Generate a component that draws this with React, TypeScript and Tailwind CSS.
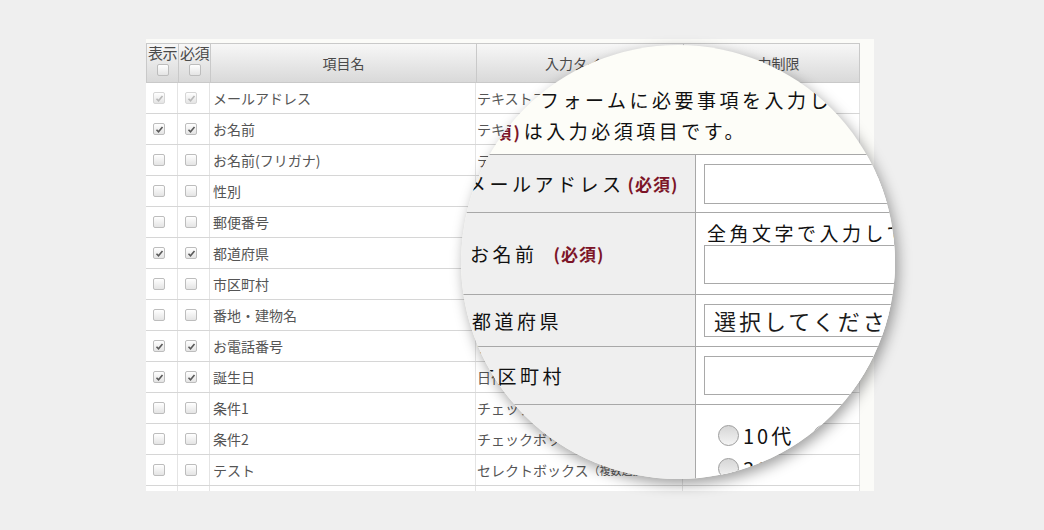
import React from 'react';

type Row = {
    name: string;
    type: string;
    note?: string;
    on: boolean;
    locked?: boolean;
};

const ROWS: Row[] = [
    { name: 'メールアドレス', type: 'テキストフォーム（メール）', on: true, locked: true },
    { name: 'お名前', type: 'テキストフォーム', on: true },
    { name: 'お名前(フリガナ)', type: 'テキストフォーム', on: false },
    { name: '性別', type: 'ラジオボタン', on: false },
    { name: '郵便番号', type: 'テキストフォーム', on: false },
    { name: '都道府県', type: 'セレクトボックス', on: true },
    { name: '市区町村', type: 'テキストフォーム', on: false },
    { name: '番地・建物名', type: 'テキストフォーム', on: false },
    { name: 'お電話番号', type: 'テキストフォーム', on: true },
    { name: '誕生日', type: '日付', on: true },
    { name: '条件1', type: 'チェックボックス', on: false },
    { name: '条件2', type: 'チェックボックス', note: '（複数選択）', on: false },
    { name: 'テスト', type: 'セレクトボックス', note: '（複数選択可）', on: false },
];

function Check({ on, locked }: { on: boolean; locked?: boolean }) {
    return (
        <span
            className={
                'flex h-[12px] w-[12px] items-center justify-center rounded-[2px] border bg-linear-to-b from-[#ffffff] to-[#e4e4e4] ' +
                (locked ? 'border-[#d6d6d6]' : 'border-[#bdbdbd]')
            }
        >
            {on && (
                <svg width="9" height="9" viewBox="0 0 9 9">
                    <path
                        d="M1.5 4.8 L3.5 6.8 L7.5 2"
                        fill="none"
                        stroke={locked ? '#b8b8b8' : '#5a5a5a'}
                        strokeWidth="1.6"
                    />
                </svg>
            )}
        </span>
    );
}

function Required({ className = '' }: { className?: string }) {
    return (
        <span className={'text-[17px] font-bold tracking-[1px] text-[#7c1528] ' + className}>(必須)</span>
    );
}

function Radio() {
    return (
        <span className="inline-block h-[21px] w-[21px] shrink-0 rounded-full border border-[#9c9c9c] bg-linear-to-b from-[#d6d6d6] to-[#f4f4f4]" />
    );
}

function Lens() {
    return (
        <div className="absolute left-[461px] top-[45px] h-[434px] w-[434px] overflow-hidden rounded-full bg-[#fdfdf8] shadow-[3px_5px_14px_rgba(0,0,0,0.38)]">
            <div className="w-[560px] pt-[39px] text-[19px] leading-[31px] tracking-[3.5px] text-[#111]">
                <p className="whitespace-nowrap pl-[79px]">フォームに必要事項を入力し、送信してください。</p>
                <p className="whitespace-nowrap pl-[6px]">
                    <Required className="mr-[2px] tracking-[2px]" />
                    は入力必須項目です。
                </p>

                <div className="mt-[7px] border-t border-[#a8a8a8]">
                    {/* メールアドレス */}
                    <div className="flex h-[58px] border-b border-[#a8a8a8]">
                        <div className="flex w-[235px] shrink-0 items-center whitespace-nowrap border-r border-[#a8a8a8] bg-[#efefef] pl-[6px]">
                            メールアドレス
                            <Required className="ml-[3px]" />
                        </div>
                        <div className="flex flex-1 items-center bg-white pl-[8px]">
                            <span className="h-[40px] w-[300px] border border-[#a9a9a9] bg-white" />
                        </div>
                    </div>

                    {/* お名前 */}
                    <div className="flex h-[82px] border-b border-[#a8a8a8]">
                        <div className="flex w-[235px] shrink-0 items-center whitespace-nowrap border-r border-[#a8a8a8] bg-[#efefef] pl-[9px]">
                            お名前
                            <Required className="ml-[16px]" />
                        </div>
                        <div className="flex flex-1 flex-col bg-white pl-[8px] pt-[8px]">
                            <p className="h-[24px] whitespace-nowrap pl-[3px] leading-[24px]">全角文字で入力してください</p>
                            <span className="h-[39px] w-[300px] border border-[#a9a9a9] bg-white" />
                        </div>
                    </div>

                    {/* 都道府県 */}
                    <div className="flex h-[52px] border-b border-[#a8a8a8]">
                        <div className="flex w-[235px] shrink-0 items-center border-r border-[#a8a8a8] bg-[#efefef] pl-[11px]">
                            都道府県
                        </div>
                        <div className="flex flex-1 items-center bg-white pl-[8px]">
                            <span className="flex h-[33px] w-[300px] items-center whitespace-nowrap border border-[#a9a9a9] bg-white pl-[9px] text-[22px] tracking-[3px] text-[#1c1c1c]">
                                選択してください
                            </span>
                        </div>
                    </div>

                    {/* 市区町村 */}
                    <div className="flex h-[58px] border-b border-[#a8a8a8]">
                        <div className="flex w-[235px] shrink-0 items-center border-r border-[#a8a8a8] bg-[#efefef] pl-[14px]">
                            市区町村
                        </div>
                        <div className="flex flex-1 items-center bg-white pl-[8px]">
                            <span className="h-[39px] w-[300px] border border-[#a9a9a9] bg-white" />
                        </div>
                    </div>

                    {/* 年代 */}
                    <div className="flex h-[90px]">
                        <div className="w-[235px] shrink-0 border-r border-[#a8a8a8] bg-[#efefef]" />
                        <div className="flex flex-1 flex-col gap-[12px] bg-white pl-[22px] pt-[20px] text-[20px] leading-[21px] tracking-[3px]">
                            <div className="flex items-center gap-[4px] whitespace-nowrap">
                                <Radio />
                                <span className="w-[66px]">10代</span>
                                <Radio />
                                <span>20代</span>
                            </div>
                            <div className="flex items-center gap-[4px] whitespace-nowrap">
                                <Radio />
                                <span>30代</span>
                            </div>
                        </div>
                    </div>
                </div>
            </div>
        </div>
    );
}

export default function App() {
    return (
        <div className="relative h-[530px] w-[1044px] overflow-hidden bg-[#efefef] pl-[146px] pt-[39px] font-['Noto_Sans_CJK_JP',sans-serif]">
            <div className="h-[452px] w-[728px] overflow-hidden bg-[#fbfbf8] pt-[4px]">
                <div className="w-[714px]">
                    {/* header */}
                    <div className="flex h-[40px] border-y border-l border-[#c9c9c9] bg-linear-to-b from-[#f7f7f7] to-[#d9d9d9] text-[#4a4a4a]">
                        <div className="flex w-[32px] flex-col items-center border-r border-[#c9c9c9]">
                            <span className="text-[15px] leading-[18px] tracking-[-0.5px]">表示</span>
                            <span className="mt-[2px]"><Check on={false} /></span>
                        </div>
                        <div className="flex w-[32px] flex-col items-center border-r border-[#c9c9c9]">
                            <span className="text-[15px] leading-[18px] tracking-[-0.5px]">必須</span>
                            <span className="mt-[2px]"><Check on={false} /></span>
                        </div>
                        <div className="flex w-[266px] items-center justify-center border-r border-[#c9c9c9] text-[14px]">項目名</div>
                        <div className="flex w-[207px] items-center justify-center border-r border-[#c9c9c9] text-[14px]">入力タイプ</div>
                        <div className="flex flex-1 items-center justify-center border-r border-[#c9c9c9] text-[14px]">入力制限</div>
                    </div>

                    {/* rows */}
                    {[...ROWS, null].map((r, i) => (
                        <div key={i} className="flex h-[31px] border-b border-[#d6d6d6] bg-white text-[14px] text-[#555]">
                            <div className="flex w-[32px] items-center border-r border-[#e4e4e4] pl-[7px]">
                                {r && <Check on={r.on} locked={r.locked} />}
                            </div>
                            <div className="flex w-[32px] items-center border-r border-[#e4e4e4] pl-[7px]">
                                {r && <Check on={r.on} locked={r.locked} />}
                            </div>
                            <div className="flex w-[266px] items-center border-r border-[#e4e4e4] pl-[3px]">{r?.name}</div>
                            <div className="flex w-[207px] items-center whitespace-nowrap border-r border-[#e4e4e4] pl-[1px]">
                                {r?.type}
                                {r?.note && <span className="text-[11px]">{r.note}</span>}
                            </div>
                            <div className="flex-1 border-r border-[#e4e4e4]" />
                        </div>
                    ))}
                </div>
            </div>

            <Lens />
        </div>
    );
}
